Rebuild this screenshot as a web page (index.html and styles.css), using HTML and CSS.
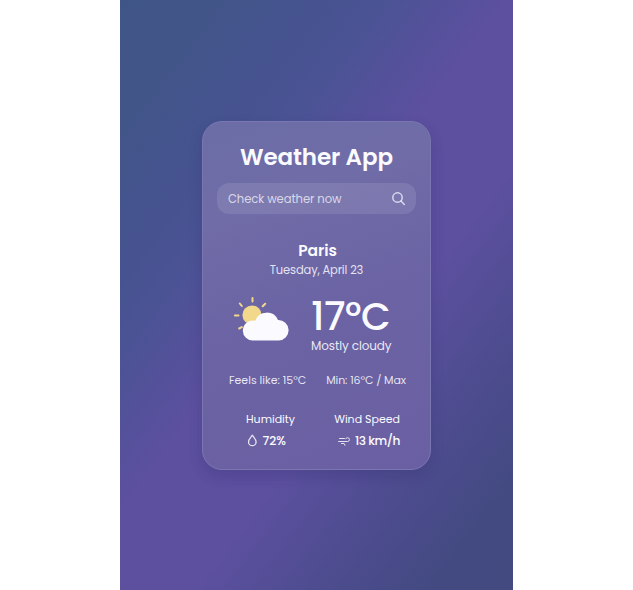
FILE: index.html
```html
<!DOCTYPE html>
<html lang="en">
<head>
<meta charset="utf-8">
<title>Weather App</title>
<link rel="stylesheet" href="styles.css">
</head>
<body>
<main class="stage">
  <section class="card">
    <h1 class="title">Weather App</h1>
    <div class="search">
      <span class="search-text">Check weather now</span>
      <svg class="search-icon" width="14" height="15" viewBox="0 0 14 15" fill="none" stroke="currentColor" stroke-width="1.500" stroke-linecap="round"><circle cx="5.500" cy="6.500" r="4.700"/><path d="M9 10.100 12.300 13.500"/></svg>
    </div>
    <h2 class="city">Paris</h2>
    <p class="date">Tuesday, April 23</p>
    <div class="current">
      <svg class="weather-icon" width="56" height="46" viewBox="0 0 56 46">
        <g stroke="#f2d88b" stroke-width="2" stroke-linecap="round"><path d="M19.500 3v3.600M6.800 8.500l2 2.500M32.200 8.700l-2.500 2.500M1.900 20.500h3.600M6.200 33.500l2.600-1.400"/></g>
        <circle cx="19" cy="20" r="9.600" fill="#f2d88b"/>
        <path fill="#fafaff" d="M20.800 45.500a10 10 0 1 1 1.300-19.700A12.300 12.300 0 0 1 45 25.100A10.200 10.200 0 0 1 45.800 45.500Z"/>
      </svg>
      <div class="reading">
        <div class="temp">17°C</div>
        <div class="condition">Mostly cloudy</div>
      </div>
    </div>
    <div class="range"><span>Feels like: 15°C</span><span class="minmax">Min: 16°C / Max</span></div>
    <div class="stats">
      <div class="stat">
        <div class="label">Humidity</div>
        <div class="value"><svg width="12" height="13" viewBox="0 0 12 13" fill="none" stroke="currentColor" stroke-width="1.300" stroke-linejoin="round"><path d="M6.300 1.200C5.100 3.100 2.500 5.400 2.500 7.900a3.800 3.800 0 0 0 7.600 0C10.100 5.400 7.500 3.100 6.300 1.200Z"/></svg><span>72%</span></div>
      </div>
      <div class="stat wind">
        <div class="label">Wind Speed</div>
        <div class="value"><svg width="12" height="12" viewBox="0 0 12 12" fill="none" stroke="currentColor" stroke-width="1" stroke-linecap="round"><path d="M1.500 3.500H6.500M.6 6.500h8.900a1.900 1.900 0 0 0 0-3.800c-1 0-1.600.5-1.700 1.100M3.500 8.500h2.500q.900 0 .9 1.800"/></svg><span>13 km/h</span></div>
      </div>
    </div>
  </section>
</main>
</body>
</html>
```
FILE: styles.css
```css
* { box-sizing: border-box; margin: 0; padding: 0; }
body { background: #fff; font-family: Poppins, Inter, "Open Sans", sans-serif; color: #fafaff; white-space: nowrap; }
.stage {
  width: 393px; height: 590px; margin-left: 120px; padding: 120.500px 0 0 82px;
  background: linear-gradient(127deg, #405587 0%, #425589 12%, #45538f 22%, #4b5395 32%, #54519a 39%, #5c509f 46%, #5c509f 62%, #504d92 74%, #494b8a 82%, #434a81 90%, #434a80 100%);
}
.card {
  width: 229px; height: 349.500px; padding: 18px 14px 0; border: 1px solid #7a76b1;
  border-radius: 20px;
  background: linear-gradient(160deg, #6b6da6 0%, #706ca7 25%, #6b63a4 55%, #6a5fa2 100%);
  box-shadow: 0 6px 14px rgba(35,30,90,.2);
}
.title { font-size: 23px; line-height: 34px; font-weight: 600; letter-spacing: -.1px; text-align: center; }
.search {
  display: flex; align-items: center; justify-content: space-between; height: 31px; margin-top: 9px;
  padding: 1px 10px 0 11px; border-radius: 12px; background: rgba(255,255,255,.1); color: rgba(250,250,255,.74);
}
.search-text { padding-top: 1px; font-size: 11.600px; letter-spacing: -.08px; }
.city { margin-top: 25px; font-size: 15.500px; line-height: 24px; font-weight: 600; letter-spacing: -.05px; text-align: center; padding-left: 2px; }
.date { font-size: 11.500px; line-height: 15px; letter-spacing: -.15px; text-align: center; color: rgba(250,250,255,.86); }
.current { display: flex; margin-top: 17px; padding-left: 16px; }
.weather-icon { flex: none; }
.reading { margin-left: 22px; padding-top: 2px; }
.temp { font-size: 38.500px; line-height: 39px; font-weight: 500; letter-spacing: -.5px; }
.condition { font-size: 12px; line-height: 19px; letter-spacing: -.12px; color: rgba(250,250,255,.9); }
.range { display: flex; justify-content: space-between; margin-top: 17px; padding: 0 10px 0 12px; font-size: 11px; line-height: 16px; color: rgba(250,250,255,.88); }
.minmax { letter-spacing: -.1px; }
.stats { display: flex; justify-content: space-between; margin-top: 23px; padding: 0 16px 0 29px; }
.label { font-size: 11px; line-height: 17px; font-weight: 400; }
.value { display: flex; align-items: center; gap: 4.500px; height: 26px; font-size: 12.200px; font-weight: 500; }
.value svg { opacity: .85; }
.wind .value { justify-content: flex-end; gap: 5px; letter-spacing: -.45px; }
```
